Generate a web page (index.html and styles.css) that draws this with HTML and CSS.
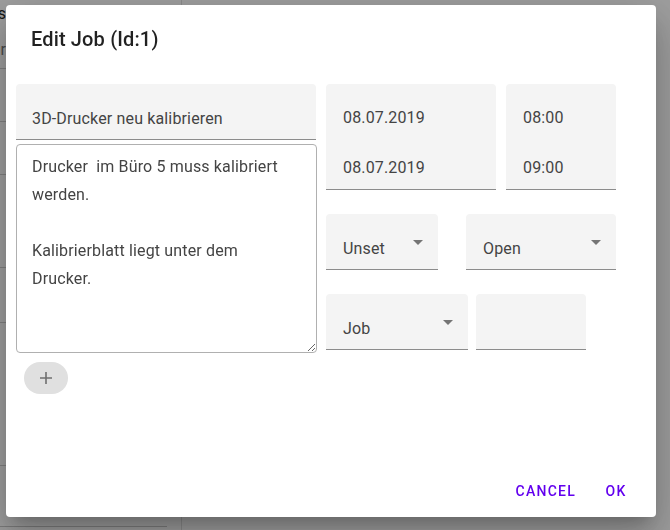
FILE: index.html
```html
<!DOCTYPE html>
<html lang="de">
<head>
<meta charset="utf-8">
<title>Edit Job</title>
<link rel="stylesheet" href="styles.css">
</head>
<body>
<div class="page">
  <aside class="side">
    <div class="side-head"><span class="frag">s</span><span class="frag small">r</span></div>
    <div class="side-row r1"></div>
    <div class="side-row r2"></div>
    <div class="side-row r3"></div>
    <div class="side-row r4"></div>
    <div class="side-row r5"></div>
    <div class="side-row r6"></div>
    <div class="side-foot"></div>
  </aside>
  <main class="main"></main>
</div>

<div class="backdrop">
  <div class="dialog" role="dialog">
    <h2 class="dialog-title">Edit Job (Id:1)</h2>
    <div class="dialog-content">
      <div class="col-left">
        <div class="filled field-title"><span class="val">3D-Drucker neu kalibrieren</span></div>
        <textarea class="desc">Drucker  im Büro 5 muss kalibriert werden.

Kalibrierblatt liegt unter dem Drucker.</textarea>
        <button class="add-btn" type="button" aria-label="add">
          <svg width="14" height="14" viewBox="0 0 14 14"><path d="M7 1v12M1 7h12" stroke="#6f6f6f" stroke-width="1.6" fill="none"/></svg>
        </button>
      </div>
      <div class="col-right">
        <div class="row row-1">
          <div class="filled stack w-date">
            <span class="val">08.07.2019</span>
            <span class="val">08.07.2019</span>
          </div>
          <div class="filled stack w-time">
            <span class="val">08:00</span>
            <span class="val">09:00</span>
          </div>
        </div>
        <div class="row row-2">
          <div class="filled select w-unset"><span class="val">Unset</span><span class="arrow"></span></div>
          <div class="filled select w-open"><span class="val">Open</span><span class="arrow"></span></div>
        </div>
        <div class="row row-3">
          <div class="filled select w-job"><span class="val">Job</span><span class="arrow"></span></div>
          <div class="filled w-empty"></div>
        </div>
      </div>
    </div>
    <div class="dialog-actions">
      <button class="text-btn" type="button">Cancel</button>
      <button class="text-btn" type="button">OK</button>
    </div>
  </div>
</div>
</body>
</html>
```

FILE: styles.css
```css
* { box-sizing: border-box; }
html, body { margin: 0; padding: 0; height: 100%; }
body {
  font-family: Roboto, "Liberation Sans", sans-serif;
  background: #fff;
  overflow: hidden;
}
.page { display: flex; height: 530px; }
.side {
  width: 182px;
  border-right: 1px solid #e0e0e0;
  display: flex;
  flex-direction: column;
}
.side-head {
  height: 69px;
  border-bottom: 1px solid #d0d0d0;
  padding-top: 5px;
  display: flex;
  flex-direction: column;
  gap: 18px;
}
.frag { font-size: 16px; line-height: 18px; color: #222; display: block; width: 6px; overflow: hidden; direction: rtl; }
.frag.small { color: #777; }
.side-row { border-bottom: 1px solid #d0d0d0; }
.r1 { height: 53px; }
.r2 { height: 53px; }
.r3 { height: 93px; }
.r4 { height: 55px; }
.r5 { height: 143px; }
.r6 { height: 60px; border-bottom: none; }
.side-foot { width: 167px; border-bottom: 1px solid #c8c8c8; }
.main { flex: 1; }

.backdrop {
  position: fixed;
  inset: 0;
  background: rgba(0, 0, 0, 0.38);
}
.dialog {
  position: absolute;
  left: 6px;
  top: 5px;
  width: 650px;
  height: 512px;
  background: #fff;
  border-radius: 4px;
  box-shadow: 0 11px 15px -7px rgba(0,0,0,.2), 0 24px 38px 3px rgba(0,0,0,.14), 0 9px 46px 8px rgba(0,0,0,.12);
  display: flex;
  flex-direction: column;
}
.dialog-title {
  margin: 0;
  padding: 18px 24px 0 25px;
  font-size: 20px;
  font-weight: 500;
  letter-spacing: 0.15px;
  line-height: 32px;
  color: rgba(0, 0, 0, 0.87);
}
.dialog-content {
  flex: 1;
  display: flex;
  gap: 9px;
  padding: 29px 10px 0;
}
.col-left { width: 301px; display: flex; flex-direction: column; align-items: flex-start; }
.col-right { display: flex; flex-direction: column; gap: 24px; }
.row { display: flex; }
.row-1 { gap: 10px; }
.row-2 { gap: 28px; }
.row-3 { gap: 8px; }

.filled {
  background: #f4f4f4;
  border-radius: 4px 4px 0 0;
  border-bottom: 1px solid #8c8c8c;
  height: 56px;
  padding: 25px 12px 0 17px;
  position: relative;
}
.val {
  display: block;
  font-size: 16px;
  line-height: 20px;
  letter-spacing: 0.15px;
  color: #444;
  white-space: nowrap;
}
.field-title { width: 300px; padding-left: 16px; }
.stack { height: 106px; padding-top: 24px; display: flex; flex-direction: column; gap: 30px; }
.w-date { width: 170px; }
.w-time { width: 110px; }
.w-unset { width: 112px; }
.w-open { width: 150px; }
.w-job { width: 142px; }
.w-empty { width: 110px; }
.arrow {
  position: absolute;
  right: 15px;
  top: 26px;
  width: 0;
  height: 0;
  border-left: 5px solid transparent;
  border-right: 5px solid transparent;
  border-top: 5px solid #757575;
}

.desc {
  margin-top: 4px;
  width: 301px;
  height: 209px;
  border: 1px solid #b0b0b0;
  border-radius: 4px;
  padding: 8px 20px 6px 15px;
  font-family: Roboto, "Liberation Sans", sans-serif;
  font-size: 16px;
  line-height: 28px;
  letter-spacing: 0.15px;
  color: #444;
  resize: both;
  background: #fff;
}
.add-btn {
  margin: 9px 0 0 8px;
  width: 44px;
  height: 32px;
  border: none;
  border-radius: 16px;
  background: #e0e0e0;
  display: flex;
  align-items: center;
  justify-content: center;
  padding: 0;
}

.dialog-actions {
  display: flex;
  justify-content: flex-end;
  padding: 8px;
}
.text-btn {
  min-width: 64px;
  height: 36px;
  padding: 0 8px;
  border: none;
  background: transparent;
  font-family: Roboto, "Liberation Sans", sans-serif;
  font-size: 14px;
  font-weight: 500;
  letter-spacing: 1.25px;
  text-transform: uppercase;
  color: #6200ee;
}
```
